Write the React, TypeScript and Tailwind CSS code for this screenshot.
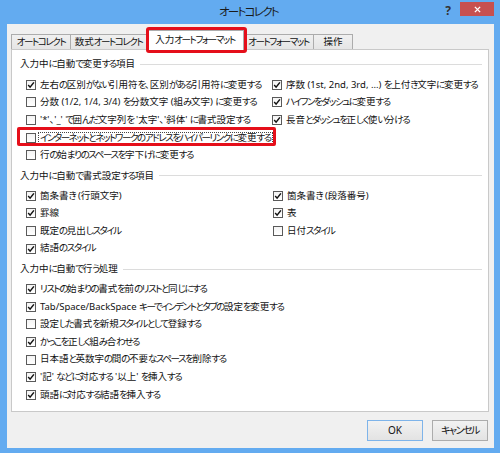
import * as React from 'react'

// Noto's kana are wider than the dialog's UI font, so tighten kana runs only
function Jp({ text }: { text: string }) {
  const parts = text.split(/([\u3040-\u30ff]+)/)
  return (
    <>
      {parts.map((p, i) =>
        i % 2 ? (
          <span key={i} className="tracking-[-0.15em]">
            {p}
          </span>
        ) : (
          p
        )
      )}
    </>
  )
}

function Check({ on }: { on?: boolean }) {
  return (
    <span className="flex h-[10px] w-[10px] shrink-0 items-center justify-center border border-[#5a5a5a] bg-gradient-to-b from-[#f4f4f4] to-white">
      {on && (
        <svg viewBox="0 0 8 8" className="h-[8px] w-[8px]">
          <path d="M1.2 4.1 L3.1 6.2 L6.9 1.4" fill="none" stroke="#111" strokeWidth="1.5" />
        </svg>
      )}
    </span>
  )
}

function Row({ label, on, focus }: { label: string; on?: boolean; focus?: boolean }) {
  return (
    <div className={`relative flex h-[17.6px] items-center gap-[2px] ${focus ? 'w-fit' : ''}`}>
      <Check on={on} />
      <span
        className={
          focus
            ? 'whitespace-nowrap border border-dotted border-[#444] px-[1px] leading-[10px]'
            : 'whitespace-nowrap px-[2px]'
        }
      >
        <Jp text={label} />
      </span>
      {/* red highlight around the row */}
      {focus && (
        <span className="pointer-events-none absolute -right-[3px] left-[-9px] top-[-1.5px] h-[19px] rounded-[2px] border-[3px] border-[#e50f1a]" />
      )}
    </div>
  )
}

function Header({ title }: { title: string }) {
  return (
    <div className="flex h-[14px] items-center pl-[8px] pr-[6px]">
      <span className="whitespace-nowrap">
        <Jp text={title} />
      </span>
      <span className="ml-[5px] h-px flex-1 bg-[#dcdcdc]" />
    </div>
  )
}

const tabs = [
  { label: 'オートコレクト', w: 'w-[60px]' },
  { label: '数式オートコレクト', w: 'w-[77px]' },
  { label: '入力オートフォーマット', w: 'w-[98px]', active: true },
  { label: 'オートフォーマット', w: 'w-[71px]' },
  { label: '操作', w: 'w-[40px]' },
]

export default function App() {
  return (
    <div className="flex h-[453px] w-[500px] flex-col bg-[#63abf0] px-[6px] pb-[5px] pl-[7px] font-['Noto_Sans','Noto_Sans_CJK_JP',sans-serif] text-[9.5px] text-[#111] [font-feature-settings:'palt']">
      {/* Title bar */}
      <div className="grid h-[24px] shrink-0 grid-cols-[1fr_auto_1fr]">
        <div />
        <div className="flex items-center pr-[4px] text-[11.5px] text-[#1a1a1a]">
          <Jp text="オートコレクト" />
        </div>
        <div className="flex items-start justify-end">
          <span className="mr-[9px] mt-[2px] text-[12px] font-bold text-[#333]">?</span>
          <span className="mt-[2px] flex h-[14px] w-[34px] items-center justify-center bg-[#c75050]">
            <svg viewBox="0 0 8 8" className="h-[7px] w-[7px]">
              <path d="M1 1 L7 7 M7 1 L1 7" stroke="#fff" strokeWidth="1.6" />
            </svg>
          </span>
        </div>
      </div>

      {/* Dialog body */}
      <div className="flex flex-1 flex-col bg-[#f0f0f0] pl-[4px] pr-[5px]">
        {/* Tabs */}
        <div className="flex h-[25px] shrink-0 items-end">
          {tabs.map((t, i) =>
            t.active ? (
              <div
                key={t.label}
                className={`relative z-10 -mb-px flex h-[20px] ${t.w} ${i > 0 ? '-ml-px' : ''} items-center justify-center border border-b-0 border-[#acacac] bg-white`}
              >
                <Jp text={t.label} />
                <span className="pointer-events-none absolute left-[-1px] top-[-4px] h-[26px] w-[101px] rounded-[3px] border-[3px] border-[#e50f1a]" />
              </div>
            ) : (
              <div
                key={t.label}
                className={`flex h-[15px] ${t.w} ${i > 0 ? '-ml-px' : ''} items-center justify-center whitespace-nowrap border border-b-0 border-[#acacac] bg-gradient-to-b from-[#f0f0f0] to-[#e5e5e5]`}
              >
                <Jp text={t.label} />
              </div>
            )
          )}
        </div>

        {/* Panel */}
        <div className="flex flex-1 flex-col border border-[#c9c9c9] bg-white pt-[7px]">
          <Header title="入力中に自動で変更する項目" />
          <div className="mt-[5px] flex pl-[14px]">
            <div className="w-[246px]">
              <Row on label="左右の区別がない引用符を、区別がある引用符に変更する" />
              <Row label="分数 (1/2, 1/4, 3/4) を分数文字 (組み文字) に変更する" />
              <Row label="'*'、'_' で囲んだ文字列を '太字'、'斜体' に書式設定する" />
              <Row focus label="インターネットとネットワークのアドレスをハイパーリンクに変更する" />
              <Row label="行の始まりのスペースを字下げに変更する" />
            </div>
            <div>
              <Row on label="序数 (1st, 2nd, 3rd, ...) を上付き文字に変更する" />
              <Row on label="ハイフンをダッシュに変更する" />
              <Row on label="長音とダッシュを正しく使い分ける" />
            </div>
          </div>

          <div className="mt-[5px]">
            <Header title="入力中に自動で書式設定する項目" />
          </div>
          <div className="mt-[4px] flex pl-[14px]">
            <div className="w-[246px]">
              <Row on label="箇条書き (行頭文字)" />
              <Row on label="罫線" />
              <Row label="既定の見出しスタイル" />
              <Row on label="結語のスタイル" />
            </div>
            <div className="pl-[1px]">
              <Row on label="箇条書き (段落番号)" />
              <Row on label="表" />
              <Row label="日付スタイル" />
            </div>
          </div>

          <div className="mt-[5px]">
            <Header title="入力中に自動で行う処理" />
          </div>
          <div className="mt-[4px] pl-[14px]">
            <Row on label="リストの始まりの書式を前のリストと同じにする" />
            <Row on label="Tab/Space/BackSpace キーでインデントとタブの設定を変更する" />
            <Row label="設定した書式を新規スタイルとして登録する" />
            <Row on label="かっこを正しく組み合わせる" />
            <Row label="日本語と英数字の間の不要なスペースを削除する" />
            <Row on label="'記' などに対応する '以上' を挿入する" />
            <Row on label="頭語に対応する結語を挿入する" />
          </div>
        </div>

        {/* Buttons */}
        <div className="flex shrink-0 justify-end gap-[9px] pb-[7px] pr-px pt-[8px]">
          <button className="h-[21px] w-[56px] border border-[#7eb4ea] bg-gradient-to-b from-[#f2f2f2] to-[#e3e3e3] text-[10px]">
            OK
          </button>
          <button className="h-[21px] w-[56px] border border-[#acacac] bg-gradient-to-b from-[#f2f2f2] to-[#e3e3e3] text-[10px]">
            <Jp text="キャンセル" />
          </button>
        </div>
      </div>
    </div>
  )
}
